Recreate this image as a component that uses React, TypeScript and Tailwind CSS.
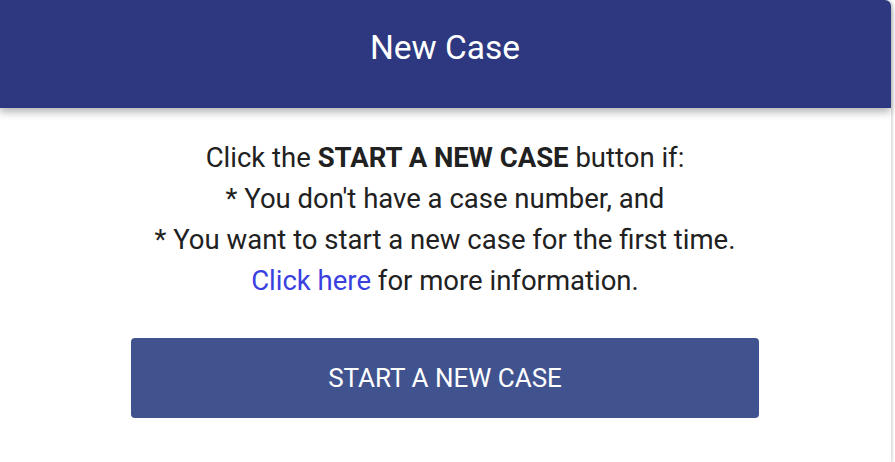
import React from 'react'

export default function App() {
  return (
    <div className="w-[895px] h-[462px] bg-white overflow-hidden font-['Roboto',sans-serif]">
      <div className="-ml-px w-[892px] h-[462px] bg-white rounded-tr-[6px] shadow-[2px_0_2px_rgba(0,0,0,0.12)]">
        <div className="h-[108px] pb-[12px] bg-[#2d3880] rounded-tr-[6px] flex items-center justify-center shadow-[0_4px_8px_rgba(0,0,0,0.3)]">
          <h1 className="text-[33.5px] text-white">New Case</h1>
        </div>
        <div className="pt-[29px] flex flex-col items-center">
          <div className="text-[27.5px] leading-[41px] text-[#212121] text-center">
            <p>
              Click the <strong className="font-bold">START A NEW CASE</strong> button if:
            </p>
            <p>* You don't have a case number, and</p>
            <p>* You want to start a new case for the first time.</p>
            <p>
              <a href="#" className="text-[#3a3fe0]">
                Click here
              </a>{' '}
              for more information.
            </p>
          </div>
          <button
            type="button"
            className="mt-[37px] w-[628px] h-[80px] rounded-[4px] bg-[#41538f] text-white text-[26px]"
          >
            START A NEW CASE
          </button>
        </div>
      </div>
    </div>
  )
}
